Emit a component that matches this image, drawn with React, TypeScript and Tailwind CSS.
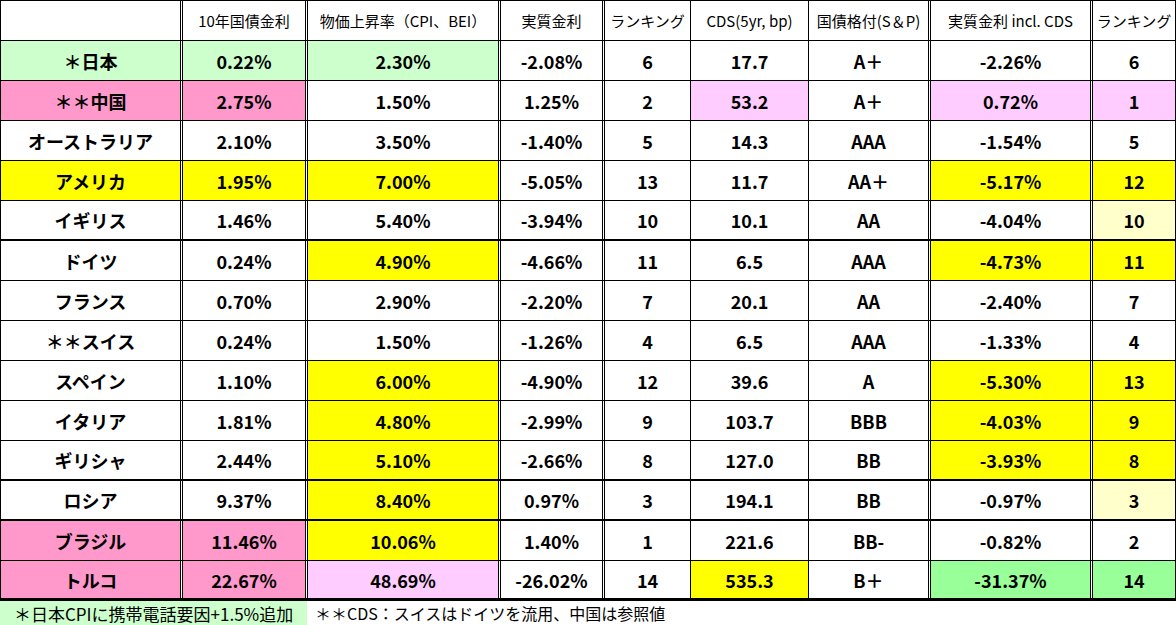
import React from "react";

const colCls = [
  "w-[182px] border-r-[3px] border-double",
  "w-[125px] border-r-[3px] border-double",
  "w-[193px] border-r-[3px] border-double",
  "w-[104px] border-r-[3px] border-double",
  "w-[86px] border-r border-solid",
  "w-[118px] border-r border-solid",
  "w-[122px] border-r-[3px] border-double",
  "w-[162px] border-r-[3px] border-double",
  "w-[83px] border-r border-solid",
];

const bgMap: Record<string, string> = {
  "": "bg-white",
  g: "bg-[#ccffcc]",
  p: "bg-[#ff99cc]",
  y: "bg-[#ffff00]",
  lp: "bg-[#ffccff]",
  ly: "bg-[#ffffcc]",
  G: "bg-[#99ff99]",
};

const header = [
  "",
  "10年国債金利",
  "物価上昇率（CPI、BEI）",
  "実質金利",
  "ランキング",
  "CDS(5yr, bp)",
  "国債格付(S＆P)",
  "実質金利 incl. CDS",
  "ランキング",
];

type Row = { c: string[]; bg: string[]; b: string };

const rows: Row[] = [
  { c: ["＊日本", "0.22%", "2.30%", "-2.08%", "6", "17.7", "A＋", "-2.26%", "6"], bg: ["g", "g", "g", "", "", "", "", "", ""], b: "border-b" },
  { c: ["＊＊中国", "2.75%", "1.50%", "1.25%", "2", "53.2", "A＋", "0.72%", "1"], bg: ["p", "p", "", "", "", "lp", "", "lp", "lp"], b: "border-b" },
  { c: ["オーストラリア", "2.10%", "3.50%", "-1.40%", "5", "14.3", "AAA", "-1.54%", "5"], bg: ["", "", "", "", "", "", "", "", ""], b: "border-b" },
  { c: ["アメリカ", "1.95%", "7.00%", "-5.05%", "13", "11.7", "AA＋", "-5.17%", "12"], bg: ["y", "y", "y", "", "", "", "", "y", "y"], b: "border-b" },
  { c: ["イギリス", "1.46%", "5.40%", "-3.94%", "10", "10.1", "AA", "-4.04%", "10"], bg: ["", "", "", "", "", "", "", "", "ly"], b: "border-b-2" },
  { c: ["ドイツ", "0.24%", "4.90%", "-4.66%", "11", "6.5", "AAA", "-4.73%", "11"], bg: ["", "", "y", "", "", "", "", "y", "y"], b: "border-b" },
  { c: ["フランス", "0.70%", "2.90%", "-2.20%", "7", "20.1", "AA", "-2.40%", "7"], bg: ["", "", "", "", "", "", "", "", ""], b: "border-b" },
  { c: ["＊＊スイス", "0.24%", "1.50%", "-1.26%", "4", "6.5", "AAA", "-1.33%", "4"], bg: ["", "", "", "", "", "", "", "", ""], b: "border-b" },
  { c: ["スペイン", "1.10%", "6.00%", "-4.90%", "12", "39.6", "A", "-5.30%", "13"], bg: ["", "", "y", "", "", "", "", "y", "y"], b: "border-b" },
  { c: ["イタリア", "1.81%", "4.80%", "-2.99%", "9", "103.7", "BBB", "-4.03%", "9"], bg: ["", "", "y", "", "", "", "", "y", "y"], b: "border-b" },
  { c: ["ギリシャ", "2.44%", "5.10%", "-2.66%", "8", "127.0", "BB", "-3.93%", "8"], bg: ["", "", "y", "", "", "", "", "y", "y"], b: "border-b-2" },
  { c: ["ロシア", "9.37%", "8.40%", "0.97%", "3", "194.1", "BB", "-0.97%", "3"], bg: ["", "", "y", "", "", "", "", "", "ly"], b: "border-b-2" },
  { c: ["ブラジル", "11.46%", "10.06%", "1.40%", "1", "221.6", "BB-", "-0.82%", "2"], bg: ["p", "p", "y", "", "", "", "", "", ""], b: "border-b" },
  { c: ["トルコ", "22.67%", "48.69%", "-26.02%", "14", "535.3", "B＋", "-31.37%", "14"], bg: ["p", "p", "lp", "", "", "y", "", "G", "G"], b: "border-b-[3px]" },
];

export default function App() {
  return (
    <div className="w-[1176px] h-[625px] bg-white overflow-hidden font-['Noto_Sans_CJK_JP','Noto_Sans',sans-serif] text-black">
      <div className="border-t border-l border-black">
        <div className="flex h-[40px] border-b border-black bg-white">
          {header.map((h, i) => (
            <div
              key={i}
              className={`${colCls[i]} border-black flex items-center justify-center text-[15px] leading-none whitespace-nowrap`}
            >
              {h}
            </div>
          ))}
        </div>
        {rows.map((r, ri) => (
          <div key={ri} className={`flex h-[40px] ${r.b} border-black bg-white`}>
            {r.c.map((t, i) => (
              <div
                key={i}
                className={`${colCls[i]} ${bgMap[r.bg[i]]} bg-clip-padding border-black flex items-center justify-center text-[18px] font-bold leading-none whitespace-nowrap`}
              >
                {t}
              </div>
            ))}
          </div>
        ))}
      </div>
      <div className="flex h-[24px] leading-none">
        <div className="w-[307px] bg-[#ccffcc] flex items-center pl-[14px] whitespace-nowrap text-[17px]">
          ＊日本CPIに携帯電話要因+1.5%追加
        </div>
        <div className="flex items-center pl-[8px] whitespace-nowrap text-[16px]">
          ＊＊CDS：スイスはドイツを流用、中国は参照値
        </div>
      </div>
    </div>
  );
}
